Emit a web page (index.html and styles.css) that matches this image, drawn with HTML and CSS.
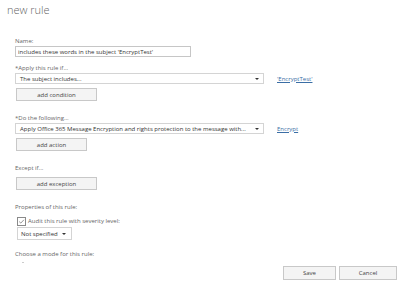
FILE: index.html
```html
<!DOCTYPE html>
<html lang="en">
<head>
    <meta charset="UTF-8">
    <meta name="viewport" content="width=device-width, initial-scale=1.0">
    <title>new rule</title>
    <link rel="stylesheet" href="styles.css">
</head>
<body>
    <div class="dialog">
        <div class="content">
            <h1 class="title">new rule</h1>

            <div class="form">
                <label class="field-label" for="ruleName">Name:</label>
                <input class="text-input" type="text" id="ruleName" value="includes these words in the subject 'EncryptTest'">

                <div class="field-label gap">*Apply this rule if...</div>
                <div class="row">
                    <div class="select wide"><span>The subject includes...</span><span class="arrow"></span></div>
                    <a class="link" href="#">'EncryptTest'</a>
                </div>
                <button class="btn add">add condition</button>

                <div class="field-label section">*Do the following...</div>
                <div class="row">
                    <div class="select wide"><span>Apply Office 365 Message Encryption and rights protection to the message with...</span><span class="arrow"></span></div>
                    <a class="link" href="#">Encrypt</a>
                </div>
                <button class="btn add small">add action</button>

                <div class="field-label section">Except if...</div>
                <button class="btn add">add exception</button>

                <div class="field-label section">Properties of this rule:</div>
                <label class="check-row">
                    <span class="checkbox">
                        <svg width="9" height="9" viewBox="0 0 9 9"><path d="M2.2 4.6 L3.8 6.1 L6.9 2.8" fill="none" stroke="#666" stroke-width="0.7"/></svg>
                    </span>
                    Audit this rule with severity level:
                </label>
                <div class="select severity"><span>Not specified</span><span class="arrow"></span></div>

                <div class="field-label section mode">Choose a mode for this rule:</div>
                <div class="cut-off"></div>
            </div>
        </div>

        <div class="footer">
            <button class="btn footer-btn save">Save</button>
            <button class="btn footer-btn cancel">Cancel</button>
        </div>
    </div>
</body>
</html>
```

FILE: styles.css
```css
body { margin: 0; background: #ffffff; font-family: "Open Sans", "Noto Sans", sans-serif; color: #444; }
.dialog { width: 400px; height: 289px; display: flex; flex-direction: column; overflow: hidden; }
.content { flex: 1; overflow: hidden; padding: 3px 0 0 7px; }
.title { margin: 0; font-size: 11px; line-height: 14px; font-weight: 300; color: #666; }

.form { margin: 20px 0 0 8px; display: flex; flex-direction: column; align-items: flex-start; }
.field-label { font-size: 6px; line-height: 8px; color: #666; margin-bottom: 1px; }
.field-label.gap { margin-top: 7px; }
.field-label.section { margin-top: 13px; }
.field-label.mode { margin-top: 10px; }

.text-input {
    width: 176px; height: 11px; box-sizing: border-box; margin: 0; padding: 0 2px;
    border: 1px solid #c6c6c6; font-family: inherit; font-size: 6px; color: #333; outline: none;
}

.row { display: flex; align-items: center; gap: 13px; }
.select {
    height: 11px; box-sizing: border-box; border: 1px solid #d4d4d4; padding: 0 4px 0 4px;
    display: flex; align-items: center; justify-content: space-between;
    font-size: 6px; color: #333; white-space: nowrap; overflow: hidden;
}
.select.wide { width: 249px; }
.arrow { width: 0; height: 0; border-left: 2px solid transparent; border-right: 2px solid transparent; border-top: 2.5px solid #333; flex: none; margin-left: 4px; }
.link { font-size: 6px; color: #3b6ea5; text-decoration: underline; }

.btn {
    font-family: inherit; font-size: 6px; color: #444; background: #f4f4f4;
    border: 1px solid #c8c8c8; box-sizing: border-box; padding: 0; margin: 0; cursor: pointer;
}
.btn.add { width: 81px; height: 13px; margin-top: 4px; margin-left: 1px; }
.btn.add.small { width: 71px; }

.check-row { display: flex; align-items: center; gap: 2px; margin-top: 4px; margin-left: 2px; font-size: 6px; line-height: 10px; color: #666; }
.checkbox { width: 9px; height: 9px; box-sizing: border-box; border: 1px solid #8a8a8a; display: flex; align-items: center; justify-content: center; }
.checkbox svg { flex: none; }
.select.severity { width: 55px; height: 13px; margin-top: 1px; margin-left: 2px; padding: 0 5px 0 3px; }
.cut-off { width: 2px; height: 1px; background: #ccc; margin: 3px 0 0 7px; }

.footer { display: flex; justify-content: flex-end; gap: 3px; padding: 0 3px 9px 0; }
.footer-btn { height: 14px; }
.save { width: 53px; }
.cancel { width: 58px; }
```
